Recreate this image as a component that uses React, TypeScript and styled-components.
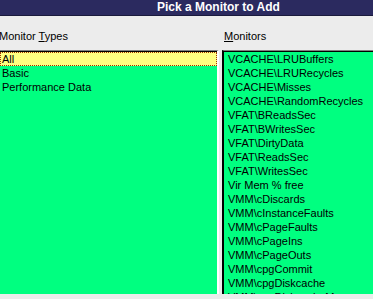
import React from "react";
import styled, { createGlobalStyle } from "styled-components";

const GlobalStyle = createGlobalStyle`
  html, body {
    margin: 0;
    padding: 0;
    background: #ececec;
    overflow: hidden;
  }
  body {
    font-family: "Liberation Sans", Arial, sans-serif;
    font-size: 11px;
    color: #000;
  }
`;

const monitorTypes = ["All", "Basic", "Performance Data"];

const monitors = [
  "VCACHE\\LRUBuffers",
  "VCACHE\\LRURecycles",
  "VCACHE\\Misses",
  "VCACHE\\RandomRecycles",
  "VFAT\\BReadsSec",
  "VFAT\\BWritesSec",
  "VFAT\\DirtyData",
  "VFAT\\ReadsSec",
  "VFAT\\WritesSec",
  "Vir Mem % free",
  "VMM\\cDiscards",
  "VMM\\cInstanceFaults",
  "VMM\\cPageFaults",
  "VMM\\cPageIns",
  "VMM\\cPageOuts",
  "VMM\\cpgCommit",
  "VMM\\cpgDiskcache",
  "VMM\\cpgDiskcacheMac",
];

const App: React.FC = () => {
  return (
    <Window>
      <GlobalStyle />
      <TitleBar>Pick a Monitor to Add</TitleBar>
      <Body>
        <Column>
          <Label>
            Monitor <u>T</u>ypes
          </Label>
          <ListBox $inset={false}>
            {monitorTypes.map((t, i) => (
              <Item key={t} $selected={i === 0}>
                {t}
              </Item>
            ))}
          </ListBox>
        </Column>
        <Column>
          <Label $indent>
            <u>M</u>onitors
          </Label>
          <ListBox $inset>
            {monitors.map((m) => (
              <Item key={m} $padded>
                {m}
              </Item>
            ))}
          </ListBox>
        </Column>
      </Body>
    </Window>
  );
};

const Window = styled.div`
  width: 373px;
  height: 299px;
  display: flex;
  flex-direction: column;
  background: #ececec;
  overflow: hidden;
`;

const TitleBar = styled.div`
  height: 15px;
  background: #2b2a5f;
  border-bottom: 1px solid #1a1a3c;
  color: #fff;
  font-weight: bold;
  font-size: 12px;
  line-height: 15px;
  padding-left: 157px;
  white-space: nowrap;
`;

const Body = styled.div`
  flex: 1;
  display: grid;
  grid-template-columns: 219px 1fr;
  gap: 3px;
  padding-bottom: 5px;
  min-height: 0;
`;

const Column = styled.div`
  display: flex;
  flex-direction: column;
  min-height: 0;
`;

const Label = styled.div<{ $indent?: boolean }>`
  height: 34px;
  box-sizing: border-box;
  padding-top: 13px;
  line-height: 14px;
  padding-left: ${(p) => (p.$indent ? "2px" : "0")};
  margin-left: ${(p) => (p.$indent ? "0" : "-1px")};
  white-space: nowrap;
  u {
    text-decoration: underline;
    text-underline-offset: 1px;
  }
`;

const ListBox = styled.div<{ $inset: boolean }>`
  flex: 1;
  background: #00ff80;
  border-top: 1px solid #808080;
  border-left: ${(p) => (p.$inset ? "2px solid #000" : "none")};
  border-right: ${(p) => (p.$inset ? "none" : "2px solid #fff")};
  box-shadow: inset 0 1px 0 #000;
  padding-top: 1px;
  overflow: hidden;
`;

const Item = styled.div<{ $selected?: boolean; $padded?: boolean }>`
  height: 14px;
  line-height: 14px;
  padding-left: ${(p) => (p.$padded ? "4px" : "2px")};
  white-space: nowrap;
  background: ${(p) => (p.$selected ? "#ffff80" : "transparent")};
  outline: ${(p) => (p.$selected ? "1px dotted #a03000" : "none")};
  outline-offset: -1px;
`;

export default App;
